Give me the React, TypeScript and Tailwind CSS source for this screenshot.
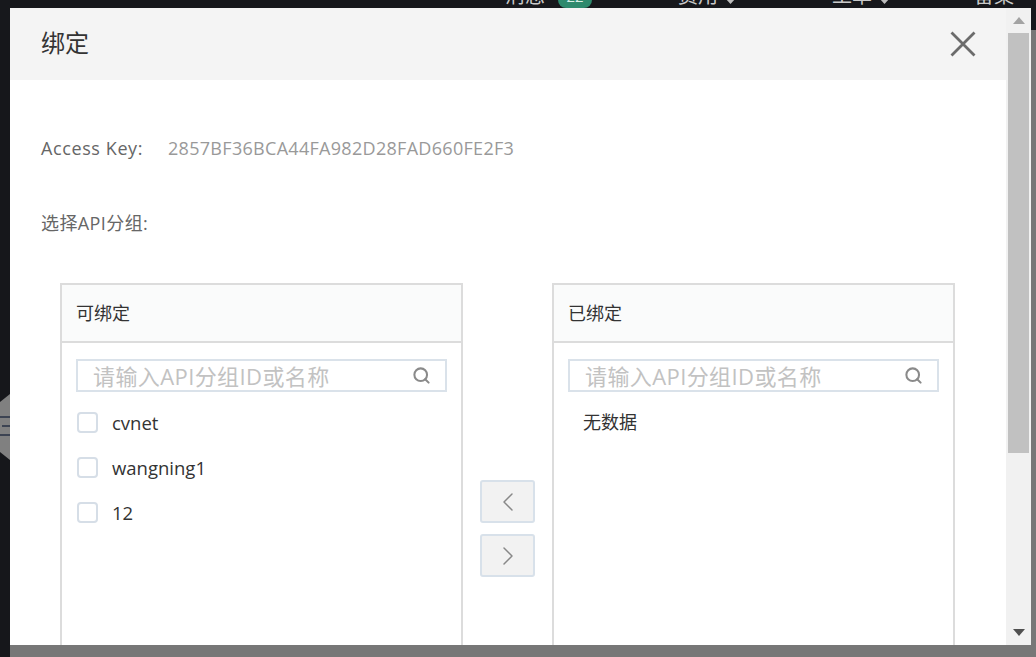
import React from "react";
import { Search, ChevronLeft, ChevronRight } from "lucide-react";

const font = "font-['Open_Sans','Noto_Sans_CJK_SC',sans-serif]";

function Checkbox() {
  return <div className="w-[21px] h-[21px] rounded-[4px] border-2 border-[#d6dee7] bg-white ml-px" />;
}

function SearchBox() {
  return (
    <div className="h-[33px] border-2 border-[#dae2ea] flex items-center pl-[15px] pr-[14px] bg-white">
      <span className="flex-1 text-[22px] tracking-[0.4px] text-[#c2c2c2] leading-none whitespace-nowrap">请输入API分组ID或名称</span>
      <Search size={19} strokeWidth={2.6} color="#8a8a8a" />
    </div>
  );
}

function Panel({ title, children }: { title: string; children: React.ReactNode }) {
  return (
    <div className="w-[403px] h-[480px] border-2 border-[#dcdcdc] flex flex-col">
      <div className="h-[58px] bg-[#fafbfb] border-b-2 border-[#dcdcdc] flex items-center pl-[14px] text-[18px] text-[#333]">
        {title}
      </div>
      <div className="px-[14px] pt-[16px]">
        <SearchBox />
        {children}
      </div>
    </div>
  );
}

function Caret() {
  return (
    <svg width="11" height="6" viewBox="0 0 11 6" className="ml-[7px] translate-y-[5px]">
      <polygon points="0,0 11,0 5.5,6" fill="#bdbdbd" />
    </svg>
  );
}

export default function App() {
  return (
    <div className={`relative w-[1036px] h-[657px] overflow-hidden bg-[#777777] ${font}`}>
      {/* page behind overlay */}
      <div className="h-[30px] bg-[#17181c] flex items-start text-[#c9c9c9] text-[20px] leading-[24px] overflow-hidden">
        <div className="flex items-center -mt-[16px] ml-[505px]">
          <span>消息</span>
          <span className="ml-[13px] w-[34px] h-[24px] rounded-[8px] bg-[#2e8a6d] text-[15px] flex items-center justify-center text-[#d8efe6]">22</span>
          <span className="ml-[86px]">费用</span>
          <Caret />
          <span className="ml-[96px]">工单</span>
          <Caret />
          <span className="ml-[84px]">备案</span>
        </div>
      </div>
      <div className="flex h-[627px]">
        <div className="w-[10px] bg-[#16171b] relative">
          <svg width="10" height="66" viewBox="0 0 10 66" className="mt-[364px]">
            <polygon points="0,8 10,0 10,66 0,58" fill="#808080" />
            <rect x="0" y="22" width="10" height="2" fill="#3c4352" />
            <rect x="2" y="31" width="8" height="2" fill="#3c4352" />
            <rect x="0" y="40" width="10" height="2" fill="#3c4352" />
          </svg>
        </div>
        <div className="flex-1" />
      </div>

      {/* modal */}
      <div className="absolute left-[10px] top-[8px] w-[1021px] h-[637px] flex bg-white">
        <div className="w-[996px] flex flex-col overflow-hidden">
          <div className="h-[72px] shrink-0 bg-[#f4f4f4] flex items-center justify-between pl-[31px] pr-[30px]">
            <span className="text-[24px] text-[#333] leading-none -mt-[2px]">绑定</span>
            <svg width="26" height="26" viewBox="0 0 26 26">
              <path d="M1.5 1.5 L24.5 24.5 M24.5 1.5 L1.5 24.5" stroke="#6b6b6b" strokeWidth="2.8" />
            </svg>
          </div>
          <div className="pl-[31px] pt-[56px]">
            <div className="flex items-center h-[24px] text-[18px]">
              <span className="text-[#666] w-[127px] tracking-[0.6px]">Access Key:</span>
              <span className="text-[#999] tracking-[0.3px]">2857BF36BCA44FA982D28FAD660FE2F3</span>
            </div>
            <div className="mt-[51px] h-[24px] flex items-center text-[18px] tracking-[0.4px] text-[#666]">选择API分组:</div>
            <div className="mt-[48px] ml-[19px] flex items-start">
              <Panel title="可绑定">
                <div className="mt-[8px]">
                  {["cvnet", "wangning1", "12"].map((t) => (
                    <div key={t} className="h-[45px] flex items-center gap-[14px] text-[18.5px] text-[#333]">
                      <Checkbox />
                      <span>{t}</span>
                    </div>
                  ))}
                </div>
              </Panel>
              <div className="w-[89px] flex flex-col items-center gap-[11px] mt-[197px]">
                <div className="w-[55px] h-[43px] rounded-[3px] border-2 border-[#d8e1ea] bg-[#f2f2f2] flex items-center justify-center">
                  <ChevronLeft size={32} strokeWidth={1.1} color="#888" />
                </div>
                <div className="w-[55px] h-[43px] rounded-[3px] border-2 border-[#d8e1ea] bg-[#f2f2f2] flex items-center justify-center">
                  <ChevronRight size={32} strokeWidth={1.1} color="#888" />
                </div>
              </div>
              <Panel title="已绑定">
                <div className="mt-[8px] h-[45px] flex items-center pl-[15px] text-[18px] text-[#333]">无数据</div>
              </Panel>
            </div>
          </div>
        </div>
        {/* scrollbar */}
        <div className="w-[25px] bg-[#f1f1f1] flex flex-col items-center">
          <div className="h-[25px] flex items-center justify-center">
            <svg width="12" height="7" viewBox="0 0 12 7"><polygon points="6,0 12,7 0,7" fill="#a3a3a3" /></svg>
          </div>
          <div className="w-[21px] h-[420px] bg-[#c1c1c1]" />
          <div className="flex-1" />
          <div className="h-[25px] flex items-center justify-center">
            <svg width="12" height="7" viewBox="0 0 12 7"><polygon points="0,0 12,0 6,7" fill="#505050" /></svg>
          </div>
        </div>
      </div>
    </div>
  );
}
